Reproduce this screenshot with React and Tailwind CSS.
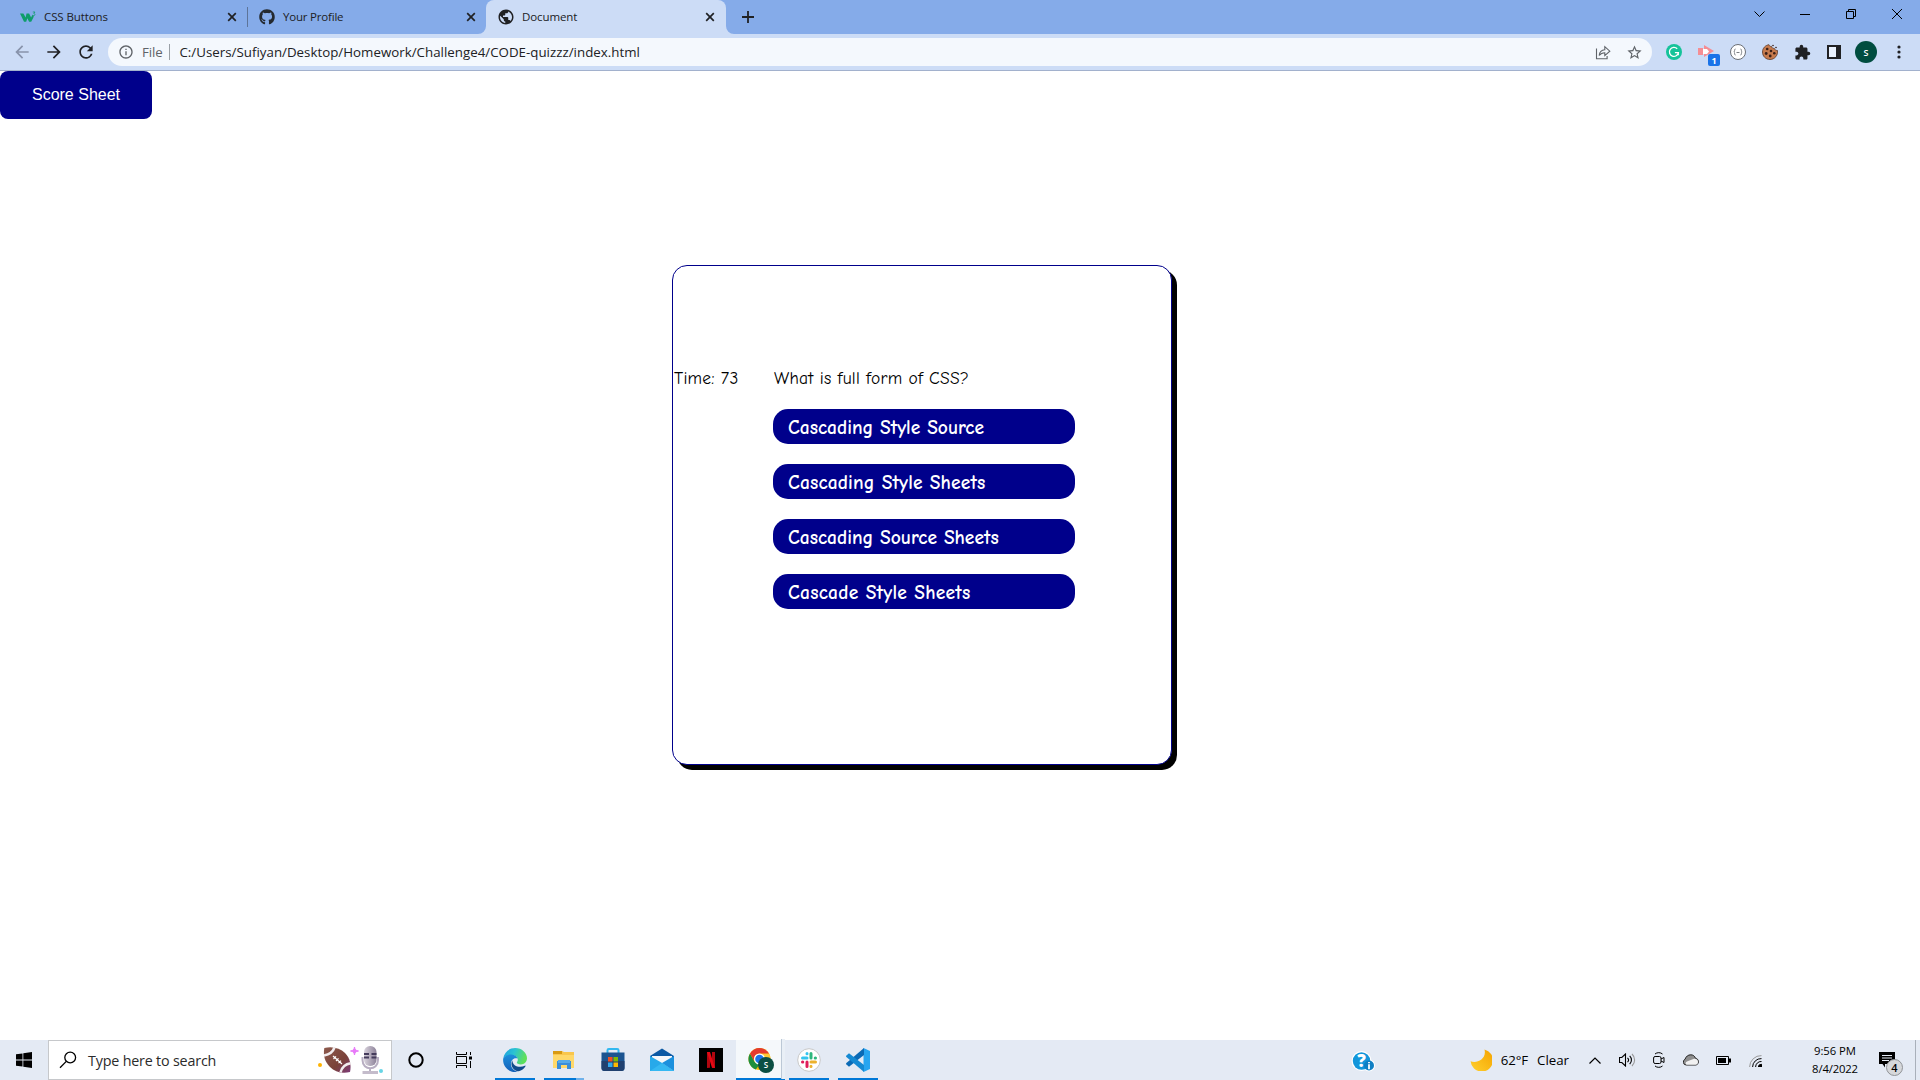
import {
  MdArrowBack,
  MdArrowForward,
  MdExtension,
  MdInfoOutline,
  MdPublic,
  MdRefresh,
  MdStarBorder,
} from "react-icons/md";
import { FaGithub } from "react-icons/fa";

function TabClose() {
  return (
    <svg className="size-[10px] shrink-0" viewBox="0 0 10 10" stroke="#202124" strokeWidth="1.7">
      <path d="M1.2 1.2l7.6 7.6M8.8 1.2L1.2 8.8" />
    </svg>
  );
}

function W3Logo() {
  return (
    <svg className="size-4" viewBox="0 0 16 16">
      <path d="M0 4.500h3.400l2.300 4 .8-4h2.600l2 4 1.200-2.400 1.500.6-.5 2-2.100 4h-2.100L7.300 9.300l-1.100 3.400H4z" fill="#0f9d6b" />
      <path d="M12.800 3h2.200l-1.200 1.500c1.500 0 1.500 2.200-.2 2.200-.5 0-.8-.2-1-.5" fill="none" stroke="#0f9d6b" strokeWidth=".8" />
    </svg>
  );
}

function TabStrip() {
  return (
    <div className="flex h-[34px] bg-[#85abe9] text-[11.5px] text-[#202124]">
      <div className="flex w-[247px] items-center pl-5 pr-[10px]">
        <W3Logo />
        <span className="ml-2 flex-1 tracking-[-0.1px]">CSS Buttons</span>
        <TabClose />
      </div>
      <div className="mt-[7px] h-5 w-px bg-[#5d7499]" />
      <div className="flex w-[238px] items-center pl-[11px] pr-[10px]">
        <FaGithub className="size-4 text-[#24292f]" />
        <span className="ml-2 flex-1 tracking-[-0.2px]">Your Profile</span>
        <TabClose />
      </div>
      <div className="relative flex w-[240px] items-center rounded-t-lg bg-[#ccdcf6] pl-3 pr-[11px]">
        <svg className="absolute -left-2 bottom-0 size-2" viewBox="0 0 8 8"><path d="M8 0v8H0a8 8 0 0 0 8-8z" fill="#ccdcf6" /></svg>
        <svg className="absolute -right-2 bottom-0 size-2" viewBox="0 0 8 8"><path d="M0 0v8h8a8 8 0 0 1-8-8z" fill="#ccdcf6" /></svg>
        <MdPublic className="-ml-px size-[18px] text-[#202124]" />
        <span className="ml-[7px] flex-1 tracking-[-0.1px]">Document</span>
        <TabClose />
      </div>
      <svg className="ml-4 mt-[11px] size-3" viewBox="0 0 12 12" stroke="#202124" strokeWidth="1.8"><path d="M6 0v12M0 6h12" /></svg>
      <div className="ml-auto flex h-7 items-center text-black">
        <span className="flex w-[46px] justify-center">
          <svg className="size-[11px]" viewBox="0 0 11 11" fill="none" stroke="#000"><path d="M.5 2.500l5 5 5-5" /></svg>
        </span>
        <span className="flex w-[46px] justify-center"><span className="mt-px h-px w-[10px] bg-black" /></span>
        <span className="flex w-[46px] justify-center">
          <svg className="size-[10px]" viewBox="0 0 10 10" fill="none" stroke="#000"><path d="M.5 2.500h7v7h-7zM2.500 2.500v-2h7v7h-2" /></svg>
        </span>
        <span className="flex w-[46px] justify-center">
          <svg className="size-[10px]" viewBox="0 0 10 10" stroke="#000"><path d="M0 0l10 10M10 0L0 10" /></svg>
        </span>
      </div>
    </div>
  );
}

function Extension({ children }) {
  return <span className="relative flex w-8 items-center justify-center">{children}</span>;
}

function Toolbar() {
  return (
    <div className="flex h-[37px] items-center border-b border-[#a2b1cd] bg-[#ccdcf6]">
      <div className="flex w-[108px] pl-[6px]">
        <span className="flex w-8 justify-center"><MdArrowBack className="size-5 text-[#8893ab]" /></span>
        <span className="flex w-8 justify-center"><MdArrowForward className="size-5 text-[#202124]" /></span>
        <span className="flex w-8 justify-center"><MdRefresh className="size-5 text-[#202124]" /></span>
      </div>
      <div className="flex h-7 w-[1544px] items-center rounded-full bg-[#f4f8fd] pl-[10px] text-[13.3px]">
        <MdInfoOutline className="size-4 text-[#5f6368]" />
        <span className="ml-[8px] pt-px tracking-[-0.15px] text-[#5f6368]">File</span>
        <span className="ml-[7px] h-4 w-px bg-[#9aa0a6]" />
        <span className="ml-[9px] pt-px tracking-[0.015px] text-[#202124]">C:/Users/Sufiyan/Desktop/Homework/Challenge4/CODE-quizzz/index.html</span>
        <svg className="ml-auto h-[15px] w-4" viewBox="0 0 16 15" fill="none" stroke="#5f6368" strokeWidth="1.1">
          <path d="M1.500 3.500v10.200h10.600v-2.600" />
          <path d="M4.200 10.500c.4-3.700 2.200-5.500 5.600-5.700V1.700L14.800 6.200l-5 4.400V7.700c-2.600 0-4.200.8-5.600 2.800z" />
        </svg>
        <MdStarBorder className="ml-[15px] mr-[9px] size-[17px] text-[#5f6368]" />
      </div>
      <div className="ml-[6px] flex h-8">
        <Extension>
          <svg className="size-4" viewBox="0 0 16 16"><circle cx="8" cy="8" r="8" fill="#15c39a" /><path d="M11.200 4.800A4.500 4.500 0 1 0 12.400 8.600H8.900M12.300 8.600v2.700" fill="none" stroke="#fff" strokeWidth="1.300" /></svg>
        </Extension>
        <Extension>
          <svg className="size-4" viewBox="0 0 16 16"><path d="M0 4h5v7H0zM6 1l10 6-10 6z" fill="#f58e94" /><path d="M5 5h4l2 2.500L9 10H5z" fill="#fff" /></svg>
          <span className="absolute left-[18px] top-[18px] flex h-3 w-3 items-center justify-center rounded-[2px] bg-[#1a73e8] text-[9px] font-bold leading-none text-white">1</span>
        </Extension>
        <Extension>
          <svg className="size-4" viewBox="0 0 16 16" fill="none" stroke="#6b6f75"><circle cx="8" cy="8" r="7.500" fill="#fff" /><path d="M5.500 5c-1.200 0-.8 1.500-1 2.300L3.800 8l.7.7c.2.800-.2 2.300 1 2.300M10.500 5c1.200 0 .8 1.500 1 2.300l.7.7-.7.7c-.2.800.2 2.300-1 2.300M6.500 8.500h3" strokeWidth=".9" /></svg>
        </Extension>
        <Extension>
          <svg className="size-4" viewBox="0 0 16 16">
            <path d="M7 .7c.3 1.400 1.500 2 2.500 1.600.2 1.500 1.500 2.300 2.800 2 .4 1.500 1.500 2.200 3.200 2.200C16.200 11 12.800 15.500 8 15.500 3.800 15.500.5 12.300.5 8 .5 4.200 3.300 1.200 7 .7z" fill="#c77b4d" stroke="#5d3a28" strokeWidth=".8" />
            <g fill="#3a1f17"><circle cx="5.200" cy="5" r="1.300" /><circle cx="9" cy="7" r="1.300" /><circle cx="4.200" cy="9.500" r="1.400" /><circle cx="8.200" cy="12" r="1.400" /><circle cx="12.300" cy="9.300" r="1.300" /><circle cx="11" cy="1.500" r=".8" /><circle cx="14" cy="3.500" r=".8" /></g>
          </svg>
        </Extension>
        <Extension><MdExtension className="size-[17px] text-[#202124]" /></Extension>
        <Extension>
          <svg className="h-[14px] w-[14px]" viewBox="0 0 14 14"><path d="M0 0h14v14H0z" fill="#202124" /><path d="M2 2h7v10H2z" fill="#e9f1fd" /></svg>
        </Extension>
        <Extension>
          <span className="flex size-[22px] items-center justify-center rounded-full bg-[#004d40] text-[9px] font-semibold leading-none text-white">S</span>
        </Extension>
        <Extension>
          <svg className="ml-px h-[14px] w-1" viewBox="0 0 4 14" fill="#202124"><circle cx="2" cy="2" r="1.600" /><circle cx="2" cy="7" r="1.600" /><circle cx="2" cy="12" r="1.600" /></svg>
        </Extension>
      </div>
    </div>
  );
}

function Answer({ className, children }) {
  return (
    <button className="flex h-[35px] w-[302px] items-center rounded-[15px] bg-[#00008b] pl-[15px] pt-[2px] text-[19.5px] font-bold text-white">
      <span className={className}>{children}</span>
    </button>
  );
}

function QuizPage() {
  return (
    <main className="h-[969px] bg-white">
      <button className="flex h-12 w-[152px] justify-center rounded-lg bg-[#00008b] pt-3 font-['Liberation_Sans',Arial,sans-serif] text-base text-white">
        Score Sheet
      </button>
      <section className="ml-[672px] mt-[146px] flex h-[500px] w-[500px] rounded-[15px] border border-[#00008b] bg-white pt-[101px] font-['Comic_Sans_MS','Comic_Neue','Noto_Sans',sans-serif] text-[17.5px] leading-[23px] text-black shadow-[5px_5px_0_0_#000]">
        <div className="w-[100px] pl-[1px] tracking-[0.25px]">Time: 73</div>
        <div className="flex flex-col gap-5">
          <p className="-mb-px pl-[1px] tracking-[0.25px]">What is full form of CSS?</p>
          <Answer>Cascading Style Source</Answer>
          <Answer className="tracking-[0.16px]">Cascading Style Sheets</Answer>
          <Answer>Cascading Source Sheets</Answer>
          <Answer className="tracking-[0.25px]">Cascade Style Sheets</Answer>
        </div>
      </section>
    </main>
  );
}

function SearchArt() {
  return (
    <svg className="h-[30px] w-[68px]" viewBox="0 0 68 30">
      <defs>
        <linearGradient id="ball" x1="0" y1="0" x2="1" y2="1"><stop offset="0" stopColor="#8d5a4d" /><stop offset=".6" stopColor="#7a4238" /><stop offset="1" stopColor="#7d3a7a" /></linearGradient>
        <linearGradient id="mic" x1="0" y1="0" x2="1" y2="0"><stop offset="0" stopColor="#d8d2dc" /><stop offset="1" stopColor="#8d8299" /></linearGradient>
      </defs>
      <circle cx="4" cy="20" r="2" fill="#ffb300" />
      <path d="M8.300 3C16 1 24 3 29 8c5 5 6.500 12 5 19-8 2-15 0-20-5S7 11 8.300 3z" fill="url(#ball)" />
      <path d="M8 10.500C13 9.500 17 7 18.500 2.300M24.500 27.500C26 22 29.500 19 34.700 18.300" fill="none" stroke="#f1ecee" strokeWidth="2.600" />
      <path d="M17 11l9 8M17.500 14l2.500-2.600M20 16l2.500-2.600M22.500 18.200l2.500-2.600" stroke="#fff" strokeWidth="1.200" />
      <path d="M38.500 2c.5 2.800 1.200 3.500 4 4-2.800.5-3.500 1.200-4 4-.5-2.800-1.200-3.500-4-4 2.800-.5 3.500-1.200 4-4z" fill="#e879f9" stroke="#e879f9" />
      <path d="M46.500 12v3c0 11 15.500 11 15.500 0v-3M54 23v4" fill="none" stroke="#b8aec2" strokeWidth="2" />
      <rect x="48" y="1" width="12.500" height="20" rx="6" fill="url(#mic)" />
      <path d="M48 8h5v2h-5zM55.500 8h5v2h-5zM48 11.500h5v2h-5zM55.500 11.500h5v2h-5z" fill="#453c5c" />
      <path d="M46.500 26h15.500v3H46.500z" fill="#c4bccb" />
      <circle cx="65" cy="26" r="2" fill="#67d5e5" />
    </svg>
  );
}

function EdgeIcon() {
  return (
    <svg className="size-6" viewBox="0 0 24 24">
      <defs>
        <linearGradient id="edgeTop" x1="0" y1="0" x2="1" y2=".3"><stop offset="0" stopColor="#1b9de2" /><stop offset=".5" stopColor="#2bc3d2" /><stop offset="1" stopColor="#5fe05a" /></linearGradient>
        <linearGradient id="edgeSide" x1="0" y1="0" x2="0" y2="1"><stop offset="0" stopColor="#1b8fdc" /><stop offset="1" stopColor="#1560b8" /></linearGradient>
      </defs>
      <path d="M.2 10.500C1.200 4.300 6 0 12.200 0 19 0 24 5 24 10.300c0 3.700-2.800 6.200-6.100 6.200-2.700 0-4.100-.9-4.100-1.900 0-.7 1-1.100 1-2.900 0-2.600-2.600-4.500-5.900-4.500C5 7.200 1.500 8.500.2 10.500z" fill="url(#edgeTop)" />
      <path d="M.2 10.500C1.800 7.800 5 6.200 8.500 6.400c3.200.2 5.600 2 6.100 4.200-3.700-1.400-6.700 1.700-6.700 5.200 0 4.200 3.100 7.400 7.200 7.700-1 .3-2 .5-3.100.5C5.100 24-.7 17.800.2 10.500z" fill="url(#edgeSide)" />
      <path d="M9.300 12.200c-2.600 5 1 10.800 6.500 11.100 2.800-.6 5.300-2.500 6.700-5 .3-.6-.2-.9-.7-.6-5.300 2.700-12.300.4-12.500-5.500z" fill="#114a8b" />
    </svg>
  );
}

function FolderIcon() {
  return (
    <svg className="size-6" viewBox="0 0 24 24">
      <path d="M1 3h9l2 1h10v16H1z" fill="#f9c64c" />
      <path d="M1 3h9v3H1z" fill="#d99a12" />
      <path d="M1 7h21v13H1z" fill="#ffd869" />
      <path d="M5 21v-8h14v8h-4v-4H9v4z" fill="#3b8ed8" />
      <path d="M6 12h12v3H6z" fill="#57aae8" />
    </svg>
  );
}

function StoreIcon() {
  return (
    <svg className="size-6" viewBox="0 0 24 24">
      <path d="M6.500 6V2.300C6.500 1.500 7 1 7.800 1h8.400c.8 0 1.300.5 1.300 1.300V6" fill="none" stroke="#32b8f0" strokeWidth="2" />
      <path d="M.5 4.500h23V20a3 3 0 0 1-3 3h-17a3 3 0 0 1-3-3z" fill="#1b5490" />
      <path d="M.5 13h23v7a3 3 0 0 1-3 3h-17a3 3 0 0 1-3-3z" fill="#20406f" />
      <path d="M7 9h4.500v4.500H7z" fill="#f25022" /><path d="M12.500 9H17v4.500h-4.500z" fill="#7fba00" />
      <path d="M7 14.500h4.500V19H7z" fill="#30a8ee" /><path d="M12.500 14.500H17V19h-4.500z" fill="#ffb900" />
    </svg>
  );
}

function MailIcon() {
  return (
    <svg className="size-6" viewBox="0 0 24 24">
      <path d="M0 8L12 .5 24 8v6H0z" fill="#0c59a4" />
      <path d="M2 8h20v7L12 16 2 15z" fill="#f5f7fa" />
      <path d="M0 8l13 7.500L24 23H0z" fill="#27a9ea" />
      <path d="M24 8v15L12 15z" fill="#1c90dd" />
      <path d="M0 23l12-8 12 8z" fill="#35b8f2" />
    </svg>
  );
}

function NetflixIcon() {
  return (
    <svg className="size-6" viewBox="0 0 24 24">
      <path d="M0 0h24v24H0z" fill="#000" />
      <path d="M8 4h3v15.700L8 20zM13 4h3v16l-3-.3z" fill="#b1060f" />
      <path d="M8 4h3l5 16-3-.3z" fill="#e50914" />
    </svg>
  );
}

function ChromeIcon() {
  return (
    <svg className="size-[26px]" viewBox="0 0 26 26">
      <circle cx="11.500" cy="12" r="11" fill="#fbbc04" />
      <path d="M2 6.500L6.700 15l4.800 2.500-3.700 5A11 11 0 0 1 2 6.500z" fill="#1e8e3e" />
      <path d="M11.500 6.500H21a11 11 0 0 1-9.500 16.500l5-8.200z" fill="#fcc934" />
      <path d="M2 6.500A11 11 0 0 1 21 6.500h-9.500A5.500 5.500 0 0 0 6.700 14.700z" fill="#e33b2e" />
      <circle cx="11.500" cy="12" r="5.500" fill="#fff" /><circle cx="11.500" cy="12" r="4.300" fill="#1a73e8" />
      <circle cx="18" cy="18" r="8" fill="#0c4f43" />
      <text x="18" y="21" textAnchor="middle" fontSize="8" fontWeight="600" fill="#fff">S</text>
    </svg>
  );
}

function SlackIcon() {
  return (
    <svg className="size-6" viewBox="0 0 24 24">
      <circle cx="12" cy="12" r="11.300" fill="#fff" stroke="#c8c8c8" />
      <g strokeWidth="3" strokeLinecap="round">
        <path d="M5.500 10h4.500M10 5.500v.3" stroke="#36c5f0" />
        <path d="M14 5.500V10M18.500 10h-.3" stroke="#2eb67d" />
        <path d="M14 14h4.500M14 18.500v-.3" stroke="#ecb22e" />
        <path d="M10 14v4.500M5.500 14h.3" stroke="#e01e5a" />
      </g>
    </svg>
  );
}

function CodeIcon() {
  return (
    <svg className="size-6" viewBox="0 0 24 24">
      <path d="M17.500 0L24 3v18l-6.500 3z" fill="#27a5f0" />
      <path d="M18 0v7L3 18.800.4 16.600c-.5-.5-.5-1 0-1.500z" fill="#0a6ab6" />
      <path d="M18 24v-7L3 5.200.4 7.400c-.5.5-.5 1 0 1.500z" fill="#1489d3" />
    </svg>
  );
}

function TaskbarApp({ children, open, split }) {
  return (
    <div className="relative flex h-10 w-[49px] items-center justify-center">
      {children}
      {open && (
        <span className="absolute bottom-0 left-[4.5px] flex h-[2px] w-10 bg-[#0078d7]">
          {split && <span className="ml-auto w-2 bg-[#6fb1ea]" />}
        </span>
      )}
    </div>
  );
}

function Tray({ children }) {
  return <span className="flex h-10 w-8 items-center justify-center">{children}</span>;
}

function Taskbar() {
  return (
    <footer className="flex h-10 bg-[#e4eaf4] text-black">
      <div className="flex w-12 items-center justify-center">
        <svg className="size-4" viewBox="0 0 16 16"><path d="M0 2.300L6.500 1.400v6.200H0zM7.300 1.300L16 0v7.600H7.300zM0 8.400h6.500v6.200L0 13.700zM7.300 8.400H16V16l-8.700-1.300z" /></svg>
      </div>
      <div className="flex w-[344px] items-center border border-[#c6c8cb] bg-white pl-[10px]">
        <svg className="size-[18px]" viewBox="0 0 18 18" fill="none" stroke="#000" strokeWidth="1.300"><circle cx="11.200" cy="6.500" r="5.400" /><path d="M7.300 10.400L1 16.700" /></svg>
        <span className="ml-[11px] pt-[2px] text-[14.3px] tracking-[-0.18px] text-[#2b2b2b]">Type here to search</span>
        <span className="ml-auto mr-[7px]"><SearchArt /></span>
      </div>
      <div className="flex w-12 items-center justify-center">
        <svg className="size-4" viewBox="0 0 16 16"><circle cx="8" cy="8" r="6.700" fill="none" stroke="#000" strokeWidth="2" /></svg>
      </div>
      <div className="flex w-12 items-center justify-center">
        <svg className="size-4" viewBox="0 0 16 16" fill="none" stroke="#000">
          <path d="M.5 0v2.500h10V0M.5 16v-2.500h10V16M.5 4.500h10v7H.5zM14.500 0v3M14.500 9v7" /><path d="M13 4.500h3v3h-3z" fill="#000" stroke="none" />
        </svg>
      </div>
      <div className="ml-[2.5px] flex">
        <TaskbarApp open><EdgeIcon /></TaskbarApp>
        <TaskbarApp open split><FolderIcon /></TaskbarApp>
        <TaskbarApp><StoreIcon /></TaskbarApp>
        <TaskbarApp><MailIcon /></TaskbarApp>
        <TaskbarApp><NetflixIcon /></TaskbarApp>
        <div className="flex h-10 w-[49px] items-center justify-center border-b-2 border-[#0078d7] bg-[#f5f8fb] pt-[2px]">
          <span className="flex h-full flex-1 items-center justify-center pl-[5px]"><ChromeIcon /></span>
          <span className="-mt-[2px] h-10 w-1 border-l border-[#bcc8d6] bg-[#e9eff6]" />
        </div>
        <TaskbarApp open><SlackIcon /></TaskbarApp>
        <TaskbarApp open><CodeIcon /></TaskbarApp>
      </div>
      <div className="ml-auto flex items-center text-[13.3px]">
        <svg className="mr-[95px] mt-[2px] h-[22px] w-6" viewBox="0 0 24 22">
          <circle cx="10.500" cy="11" r="10" fill="#fff" /><circle cx="18" cy="15.500" r="6" fill="#fff" />
          <circle cx="10.500" cy="11" r="8.700" fill="#1296db" />
          <text x="10.500" y="17" textAnchor="middle" fontSize="17" fontWeight="800" fill="#fff">?</text>
          <circle cx="18" cy="15.500" r="5" fill="#0f7fc4" /><path d="M18 12v1.300M18 14.300v5" stroke="#fff" strokeWidth="1.800" />
        </svg>
        <svg className="size-[22px]" viewBox="0 0 22 22">
          <defs><linearGradient id="moon" x1="1" y1="0" x2="0" y2="1"><stop offset="0" stopColor="#f5a300" /><stop offset="1" stopColor="#ffd02e" /></linearGradient></defs>
          <path d="M14.500.5A11.200 11.200 0 1 1 .6 12.200C6 15 17 10.500 14.500.5z" fill="url(#moon)" />
        </svg>
        <span className="ml-[9px] pt-[2px] tracking-[-0.1px]">62°F</span>
        <span className="ml-[9px] w-[42px] pt-[2px]">Clear</span>
        <Tray><svg className="h-[7px] w-3" viewBox="0 0 12 7" fill="none" stroke="#000" strokeWidth="1.200"><path d="M.5 6.500L6 1l5.500 5.500" /></svg></Tray>
        <Tray>
          <svg className="h-[14px] w-[17px]" viewBox="0 0 17 14" fill="none" stroke="#000" strokeWidth="1.100"><path d="M.5 4.500h2.300L6.500 1v12L2.800 9.500H.5zM8.500 4.800c1.200 1.200 1.200 3.200 0 4.400M10.700 2.800c2.300 2.300 2.300 6.100 0 8.400" /><path d="M13 1c3.500 3.300 3.500 8.700 0 12" stroke="#999" /></svg>
        </Tray>
        <Tray>
          <svg className="h-4 w-3" viewBox="0 0 12 16" fill="none" stroke="#000"><rect x=".6" y="4.500" width="7.400" height="7" rx="1.500" /><path d="M8 7l3-1.500v5L8 9M2 2C4 .2 7.500.2 9.500 2M2 14c2 1.800 5.500 1.800 7.500 0" /></svg>
        </Tray>
        <Tray>
          <svg className="h-3 w-4" viewBox="0 0 16 12"><path d="M3.300 11A3 3 0 0 1 2 5.300C3 2.500 5 .8 7.800.8c2.400 0 4 1.400 4.600 3.400 4 .6 4 6.300.4 6.800z" fill="#8f8f8f" stroke="#222" /><path d="M3.500 10.800c-1.500-.6-1.300-3 1-3.500L11 4.800c1.500-.3 4 .7 4 3 0 2-1 3-2.500 3z" fill="#f1f1f1" /></svg>
        </Tray>
        <Tray>
          <svg className="h-[9px] w-[15px]" viewBox="0 0 15 9"><path d="M.5.5h12v8H.5z" fill="none" stroke="#000" /><path d="M2 2h8v5H2zM13 2.500h2v4h-2z" /></svg>
        </Tray>
        <Tray>
          <svg className="mt-[2px] h-3 w-[13px]" viewBox="0 0 13 12" fill="none" stroke="#000"><path d="M.6 12A11.500 11.500 0 0 1 12.500.6" stroke="#999" /><path d="M3.600 12A8.500 8.500 0 0 1 12.500 3.600M6.600 12a5.500 5.500 0 0 1 5.900-5.500" /><path d="M9.300 12a3 3 0 0 1 3.200-2.700V12z" fill="#000" /></svg>
        </Tray>
        <div className="ml-[31px] flex w-[66px] flex-col items-center pb-px text-[11.3px] leading-[18px]">
          <span className="tracking-[-0.05px]">9:56 PM</span>
          <span className="tracking-[-0.15px]">8/4/2022</span>
        </div>
        <div className="relative ml-[11px] h-10 w-[37px] border-r border-[#a9b0ba]">
          <svg className="mt-3 h-4 w-4" viewBox="0 0 16 16"><path d="M0 0h16v12H6v3.500L3.500 12H0z" /><path d="M3 3.500h10M3 6h10M3 8.500h7" stroke="#e4eaf4" /></svg>
          <span className="absolute left-[7px] top-[19px] flex size-[17px] items-center justify-center rounded-full border border-[#909397] bg-[#d6d8db] text-[11px] font-semibold leading-none">4</span>
        </div>
        <span className="w-1" />
      </div>
    </footer>
  );
}

export default function App() {
  return (
    <div className="h-[1080px] w-[1920px] overflow-hidden bg-white font-['Open_Sans','Noto_Sans',sans-serif]">
      <TabStrip />
      <Toolbar />
      <QuizPage />
      <Taskbar />
    </div>
  );
}
